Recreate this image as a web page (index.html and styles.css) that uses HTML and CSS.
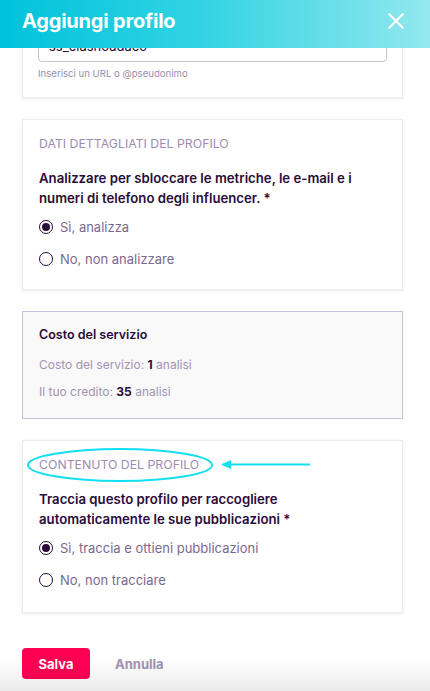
FILE: index.html
```html
<!DOCTYPE html>
<html lang="it">
<head>
<meta charset="utf-8">
<title>Aggiungi profilo</title>
<link rel="stylesheet" href="styles.css">
</head>
<body>
<header class="topbar">
  <h1 class="title">Aggiungi profilo</h1>
  <button class="close" aria-label="Chiudi">
    <svg width="16" height="16" viewBox="0 0 16 16"><path d="M1.5 1.5 L14.5 14.5 M14.5 1.5 L1.5 14.5" stroke="#fff" stroke-width="2.2" stroke-linecap="square" fill="none"/></svg>
  </button>
</header>

<main class="content">
  <section class="card card-url">
    <div class="input"><span class="input-text">ss_elasnoadaeo</span></div>
    <p class="helper">Inserisci un URL o @pseudonimo</p>
  </section>

  <section class="card">
    <h2 class="section-label">DATI DETTAGLIATI DEL PROFILO</h2>
    <p class="question">Analizzare per sbloccare le metriche, le e-mail e i numeri di telefono degli influencer. *</p>
    <div class="radios">
      <label class="radio-row"><span class="radio checked"></span><span class="radio-label">Sì, analizza</span></label>
      <label class="radio-row"><span class="radio"></span><span class="radio-label">No, non analizzare</span></label>
    </div>
  </section>

  <section class="card cost">
    <h3 class="cost-title">Costo del servizio</h3>
    <p class="cost-line">Costo del servizio: <b>1</b> analisi</p>
    <p class="cost-line">Il tuo credito: <b>35</b> analisi</p>
  </section>

  <section class="card annotated">
    <h2 class="section-label">CONTENUTO DEL PROFILO</h2>
    <svg class="annotation" width="300" height="40" viewBox="0 0 300 40">
      <ellipse cx="98" cy="17" rx="92" ry="16" fill="none" stroke="#13dff0" stroke-width="2"/>
      <path d="M201 16.5 L288 16.5" stroke="#13dff0" stroke-width="2" fill="none"/>
      <path d="M199 16.5 L209 12 L209 21 Z" fill="#13dff0"/>
    </svg>
    <p class="question">Traccia questo profilo per raccogliere automaticamente le sue pubblicazioni *</p>
    <div class="radios">
      <label class="radio-row"><span class="radio checked"></span><span class="radio-label">Sì, traccia e ottieni pubblicazioni</span></label>
      <label class="radio-row"><span class="radio"></span><span class="radio-label">No, non tracciare</span></label>
    </div>
  </section>

  <div class="actions">
    <button class="btn-save">Salva</button>
    <button class="btn-cancel">Annulla</button>
  </div>
</main>
<div class="bottom-fade"></div>
</body>
</html>
```

FILE: styles.css
```css
* { box-sizing: border-box; }
html, body { margin: 0; padding: 0; }
body {
  width: 430px;
  height: 691px;
  overflow: hidden;
  background: #ffffff;
  font-family: Inter, "Noto Sans", sans-serif;
  color: #2b0b3a;
}
.topbar {
  position: fixed;
  top: 0; left: 0; right: 0;
  height: 48px;
  z-index: 10;
  display: flex;
  align-items: center;
  justify-content: space-between;
  padding: 0 26px 0 22px;
  background: linear-gradient(90deg, #00c2db 0%, #2fd3e3 45%, #6ee0ea 80%, #93e8ee 100%);
}
.title {
  margin: 0;
  font-size: 20px;
  font-weight: 700;
  color: #ffffff;
  letter-spacing: -0.2px;
  padding-bottom: 6px;
}
.close {
  border: 0;
  background: none;
  padding: 0;
  width: 16px;
  height: 16px;
  margin-bottom: 7px;
  display: flex;
}
.content {
  padding: 9px 27px 0 22px;
  display: flex;
  flex-direction: column;
}
.card {
  background: #ffffff;
  border: 1px solid #edebf1;
  box-shadow: 0 1px 3px rgba(60, 40, 90, 0.10);
  padding: 15px 16px 14px 16px;
  margin-bottom: 21px;
}
.card-url {
  padding: 16px 15px 16px 15px;
}
.input {
  height: 36px;
  border: 1px solid #c9c3d3;
  border-radius: 4px;
  padding: 0 10px;
  display: flex;
  align-items: flex-end;
}
.input-text {
  font-size: 13px;
  line-height: 16px;
  color: #2b0b3a;
  padding-bottom: 7px;
}
.helper {
  margin: 5px 0 0 0;
  font-size: 9.6px;
  line-height: 14px;
  color: #9a8cab;
}
.section-label {
  margin: 0;
  font-size: 12.3px;
  line-height: 18px;
  font-weight: 400;
  color: #9d8cb1;
}
.question {
  margin: 16px 0 0 0;
  font-size: 13.2px;
  line-height: 19.5px;
  font-weight: 600;
  color: #2b0b3a;
}
.radios {
  margin-top: 3px;
  display: flex;
  flex-direction: column;
}
.radio-row {
  height: 32px;
  display: flex;
  align-items: center;
  gap: 7px;
}
.radio {
  width: 14px;
  height: 14px;
  border: 1.5px solid #2b0b3a;
  border-radius: 50%;
  display: flex;
  align-items: center;
  justify-content: center;
  flex: none;
}
.radio.checked::after {
  content: "";
  width: 8px;
  height: 8px;
  border-radius: 50%;
  background: #2b0b3a;
}
.radio-label {
  font-size: 13px;
  color: #7b6890;
}
.cost {
  background: #f9f9f9;
  border: 1px solid #c7bfe0;
  box-shadow: none;
  padding: 13px 16px 16px 16px;
}
.cost-title {
  margin: 0;
  font-size: 12.5px;
  line-height: 20px;
  font-weight: 600;
  color: #2b0b3a;
}
.cost-line {
  margin: 10px 0 0 0;
  font-size: 12px;
  line-height: 20px;
  color: #a293b5;
}
.cost-line + .cost-line { margin-top: 7px; }
.cost-line b { color: #2b0b3a; font-weight: 700; }
.annotated {
  position: relative;
  padding-bottom: 16px;
}
.annotation {
  position: absolute;
  left: -1px;
  top: 7px;
  pointer-events: none;
}
.actions {
  display: flex;
  align-items: center;
  gap: 25px;
  margin-top: 14px;
}
.btn-save {
  width: 68px;
  height: 31px;
  border: 0;
  border-radius: 4px;
  background: #ff0054;
  color: #ffffff;
  font-family: inherit;
  font-size: 13px;
  font-weight: 700;
}
.btn-cancel {
  border: 0;
  background: none;
  padding: 0;
  font-family: inherit;
  font-size: 13px;
  font-weight: 700;
  color: #a092b5;
}
.bottom-fade {
  position: fixed;
  left: 0; right: 0; bottom: 0;
  height: 34px;
  background: linear-gradient(180deg, rgba(0,0,0,0) 0%, rgba(0,0,0,0.035) 50%, rgba(0,0,0,0.08) 100%);
  pointer-events: none;
}
```
